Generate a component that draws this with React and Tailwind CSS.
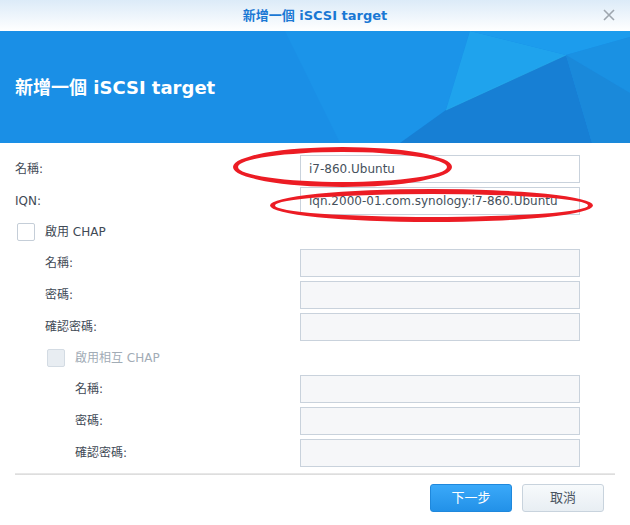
import React from "react";

const font = "font-['DejaVu_Sans','Noto_Sans_CJK_TC',sans-serif]";

const Field = ({ label, value, indent = "pl-0", filled = false }) => (
  <div className="flex items-center h-[28px] mb-1">
    <div className={`flex-1 ${indent} text-[12px] text-[#3f4a56]`}>{label}</div>
    <div
      className={`w-[280px] h-[28px] border border-[#c9d2dc] px-[8px] flex items-center text-[12px] text-[#46515c] ${
        filled ? "bg-white" : "bg-[#f6f7f9]"
      }`}
    >
      {value}
    </div>
  </div>
);

const Banner = () => (
  <div className="relative h-[112px] bg-[#1a8fe6] overflow-hidden">
    <svg className="absolute inset-0" width="630" height="112" viewBox="0 0 630 112">
      <polygon points="285,0 470,0 446,79 400,112 340,112" fill="#1b94e9" />
      <polygon points="470,0 566,24 446,79" fill="#1fa3ed" />
      <polygon points="470,0 630,0 630,6 566,24" fill="#1c9ced" />
      <polygon points="566,24 630,6 630,62" fill="#1a91e3" />
      <polygon points="446,79 566,24 592,112 400,112" fill="#177fd4" />
      <polygon points="566,24 630,62 630,112 592,112" fill="#1a89da" />
      <line x1="446" y1="79" x2="566" y2="24" stroke="#2cb4ee" strokeWidth="1" opacity="0.6" />
    </svg>
    <div className="relative h-full flex items-center pl-[15px] text-white text-[18px] font-bold">
      新增一個 iSCSI target
    </div>
  </div>
);

const Checkbox = ({ disabled }) => (
  <span
    className={`w-[18px] h-[18px] border rounded-[2px] ${
      disabled ? "bg-[#e8edf2] border-[#d3dbe3]" : "bg-white border-[#c5ced8]"
    }`}
  />
);

export default function App() {
  return (
    <div className={`relative w-[630px] h-[525px] bg-white overflow-hidden ${font}`}>
      {/* Title bar */}
      <div className="relative h-[31px] bg-gradient-to-b from-[#dcebf8] to-white flex items-center justify-center">
        <span className="text-[13px] font-bold text-[#1a78d4]">新增一個 iSCSI target</span>
        <svg className="absolute right-[15px] top-[9px]" width="12" height="12" viewBox="0 0 12 12">
          <path d="M1 1 L11 11 M11 1 L1 11" stroke="#9ea6ae" strokeWidth="1.6" />
        </svg>
      </div>

      <Banner />

      {/* Form */}
      <div className="pl-[15px] pr-[50px] pt-[12px]">
        <Field label="名稱:" value="i7-860.Ubuntu" filled />
        <Field label="IQN:" value="iqn.2000-01.com.synology:i7-860.Ubuntu" filled />

        <div className="flex items-center h-[26px] mb-1 pl-[2px] gap-[10px]">
          <Checkbox />
          <span className="text-[12px] text-[#3f4a56]">啟用 CHAP</span>
        </div>

        <Field label="名稱:" indent="pl-[30px]" />
        <Field label="密碼:" indent="pl-[30px]" />
        <Field label="確認密碼:" indent="pl-[30px]" />

        <div className="flex items-center h-[26px] mb-1 pl-[32px] gap-[10px]">
          <Checkbox disabled />
          <span className="text-[12px] text-[#a2acb6]">啟用相互 CHAP</span>
        </div>

        <Field label="名稱:" indent="pl-[60px]" />
        <Field label="密碼:" indent="pl-[60px]" />
        <Field label="確認密碼:" indent="pl-[60px]" />
      </div>

      {/* Footer */}
      <div className="mx-[15px] mt-[6px] h-[2px] bg-gradient-to-b from-[#ececec] to-[#d9d9d9]" />
      <div className="flex justify-end gap-[10px] pr-[26px] pt-[9px]">
        <button className="w-[82px] h-[28px] rounded-[3px] border border-[#1f88dc] bg-gradient-to-b from-[#3aa9f9] to-[#2291e8] text-white text-[13px]">
          下一步
        </button>
        <button className="w-[82px] h-[28px] rounded-[3px] border border-[#c8d3dd] bg-gradient-to-b from-[#f7fafc] to-[#e8eef3] text-[#4a5460] text-[13px]">
          取消
        </button>
      </div>

      {/* Red annotation ellipses */}
      <div className="absolute left-[233px] top-[147px] w-[219px] h-[40px] rounded-[50%] border-[5px] border-[#ec1c24]" />
      <div className="absolute left-[270px] top-[189px] w-[323px] h-[33px] rounded-[50%] border-[5px] border-[#ec1c24]" />
    </div>
  );
}
